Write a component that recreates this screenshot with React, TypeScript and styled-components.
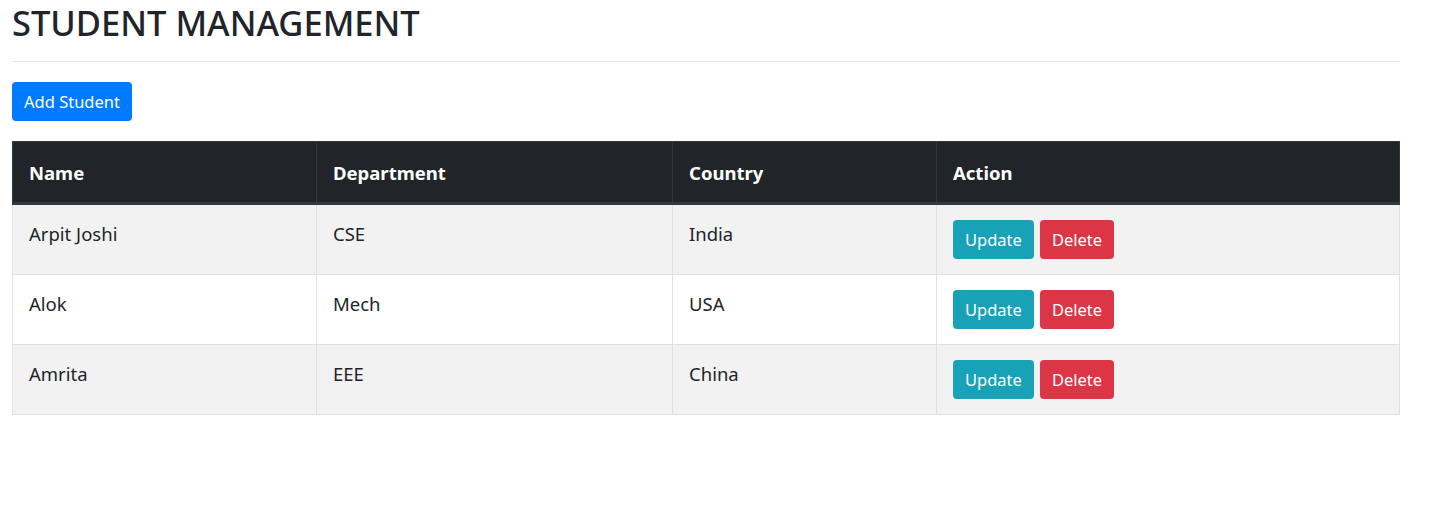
import React from "react";
import styled, { createGlobalStyle } from "styled-components";

const GlobalStyle = createGlobalStyle`
  body {
    margin: 0;
    background: #fff;
    font-family: "Noto Sans", "Open Sans", sans-serif;
    color: #212529;
  }
`;

const Page = styled.div`
  width: 1388px;
  padding: 0 12px;
`;

const Title = styled.h1`
  margin: 0;
  padding-top: 1px;
  font-size: 34.5px;
  font-weight: 500;
  line-height: 43px;
  color: #212529;
`;

const Divider = styled.hr`
  margin: 17px 0 20px;
  border: 0;
  border-top: 1px solid #e6e6e6;
`;

const Button = styled.button<{ $variant: "primary" | "info" | "danger" }>`
  height: 39px;
  padding: 0 12px;
  border: 0;
  border-radius: 4px;
  font-family: inherit;
  font-size: 16.5px;
  line-height: 39px;
  color: #fff;
  cursor: pointer;
  background: ${(p) =>
    p.$variant === "primary" ? "#007bff" : p.$variant === "info" ? "#17a2b8" : "#dc3545"};
`;

const Table = styled.table`
  margin-top: 20px;
  width: 1387px;
  table-layout: fixed;
  border-collapse: collapse;
  border: 1px solid #dee2e6;
`;

const Col = styled.col<{ $w: number }>`
  width: ${(p) => p.$w}px;
`;

const HeadCell = styled.th`
  background: #212529;
  color: #fff;
  text-align: left;
  font-size: 18.5px;
  font-weight: 700;
  line-height: 28px;
  padding: 17px 16px 15px;
  border: 1px solid #32383e;
  border-bottom: 3px solid #343a40;
`;

const Row = styled.tr<{ $striped: boolean }>`
  background: ${(p) => (p.$striped ? "#f2f2f2" : "#fff")};
`;

const Cell = styled.td`
  vertical-align: top;
  font-size: 18.5px;
  line-height: 28px;
  padding: 15px 16px 15px;
  border: 1px solid #dee2e6;
`;

const Actions = styled.div`
  display: flex;
  gap: 6px;
`;

const students = [
  { name: "Arpit Joshi", dept: "CSE", country: "India" },
  { name: "Alok", dept: "Mech", country: "USA" },
  { name: "Amrita", dept: "EEE", country: "China" },
];

const App = () => {
  return (
    <Page>
      <GlobalStyle />
      <Title>STUDENT MANAGEMENT</Title>
      <Divider />
      <Button $variant="primary">Add Student</Button>
      <Table>
        <colgroup>
          <Col $w={304} />
          <Col $w={356} />
          <Col $w={264} />
          <Col $w={463} />
        </colgroup>
        <thead>
          <tr>
            <HeadCell>Name</HeadCell>
            <HeadCell>Department</HeadCell>
            <HeadCell>Country</HeadCell>
            <HeadCell>Action</HeadCell>
          </tr>
        </thead>
        <tbody>
          {students.map((s, i) => (
            <Row key={s.name} $striped={i % 2 === 0}>
              <Cell>{s.name}</Cell>
              <Cell>{s.dept}</Cell>
              <Cell>{s.country}</Cell>
              <Cell>
                <Actions>
                  <Button $variant="info">Update</Button>
                  <Button $variant="danger">Delete</Button>
                </Actions>
              </Cell>
            </Row>
          ))}
        </tbody>
      </Table>
    </Page>
  );
};

export default App;
